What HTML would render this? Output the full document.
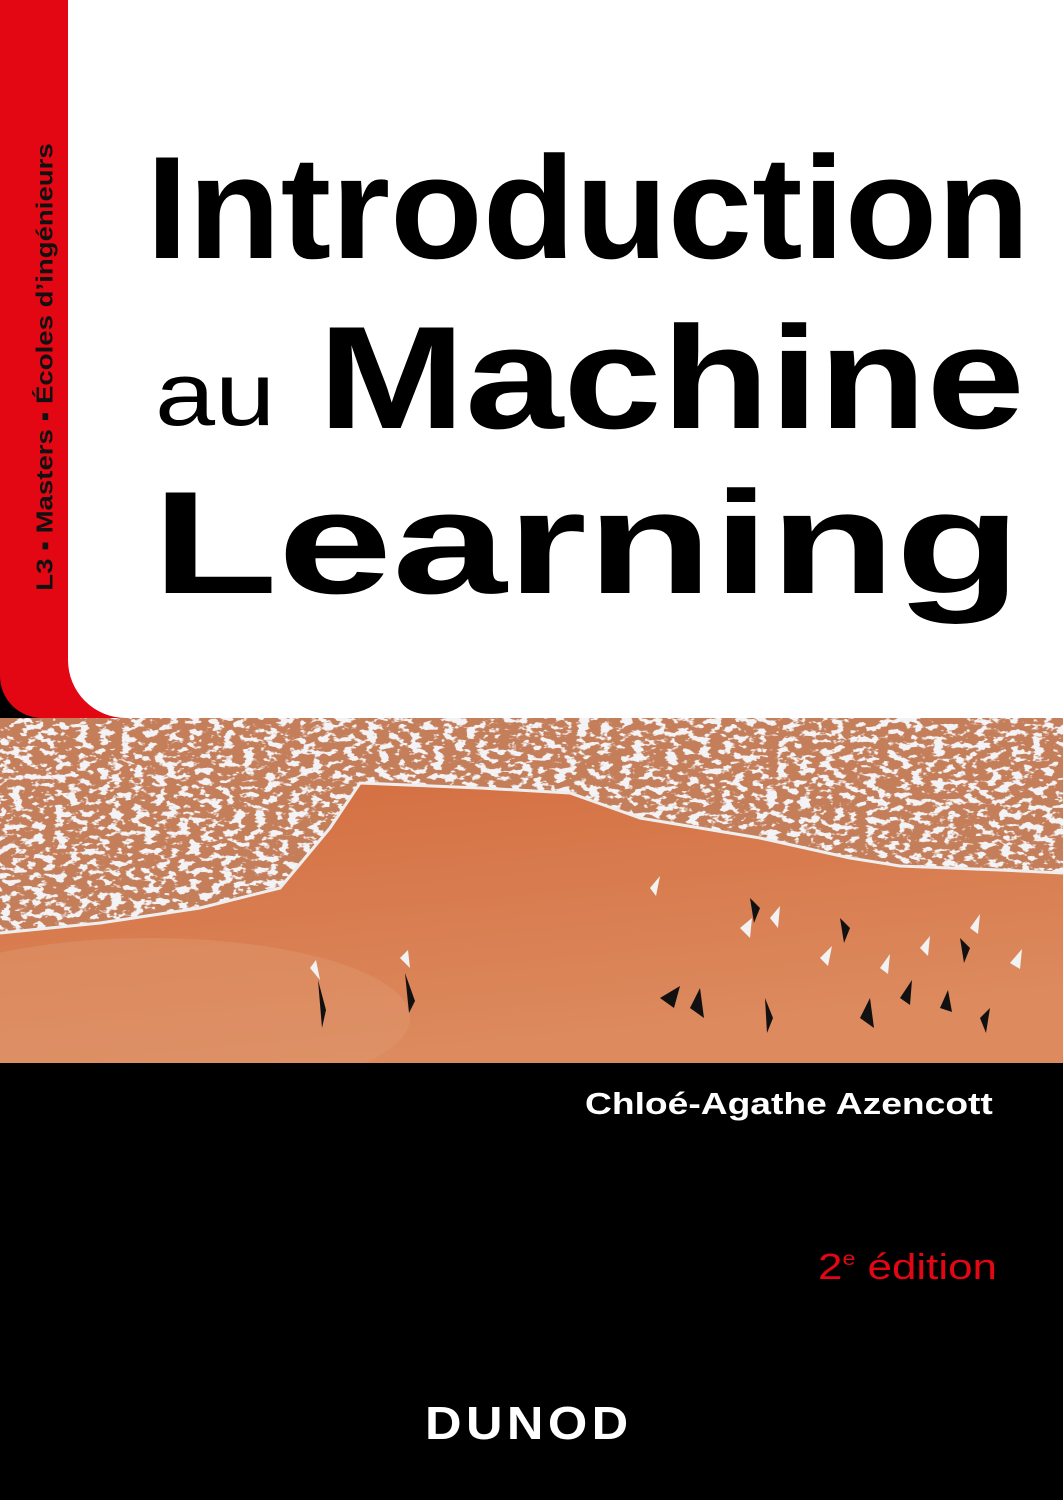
<!DOCTYPE html>
<html><head><meta charset="utf-8"><style>
html,body{margin:0;padding:0}
body{width:1063px;height:1500px;position:relative;overflow:hidden;background:#000;font-family:"Liberation Sans","DejaVu Sans",sans-serif}
#top{position:absolute;left:0;top:0;width:1063px;height:718px;background:#e30613;border-bottom-left-radius:42px}
#white{position:absolute;left:68px;top:0;width:995px;height:718px;background:#fff;border-bottom-left-radius:58px}
#side{position:absolute;left:45px;top:367px;transform:translate(-50%,-50%) rotate(-90deg) scaleX(1.2);white-space:nowrap;font-weight:bold;font-size:23px;color:#111}
.t{position:absolute;font-weight:bold;color:#000;white-space:nowrap;line-height:1;transform-origin:0 0}
#photo{position:absolute;left:0;top:718px;width:1063px;height:345px}
.s{position:absolute;white-space:nowrap;transform-origin:0 0;line-height:1}
</style></head><body>
<div id="top"></div>
<div id="white"></div>
<div id="side">L3 ▪ Masters ▪ Écoles d’ingénieurs</div>
<div class="t" style="left:146px;top:135px;font-size:146px;transform:scaleX(1.038)">Introduction</div>
<div class="t" style="left:155px;top:350px;font-size:90px;font-weight:normal;transform:scaleX(1.2)">au</div>
<div class="t" style="left:318px;top:305px;font-size:146px;transform:scaleX(1.21)">Machine</div>
<div class="t" style="left:152px;top:470px;font-size:146px;transform:scaleX(1.41)">Learning</div>
<svg id="photo" viewBox="0 0 1063 345" xmlns="http://www.w3.org/2000/svg">
<defs>
<linearGradient id="sand" x1="0" y1="0" x2="0.3" y2="1">
<stop offset="0" stop-color="#d2683a"/><stop offset="1" stop-color="#dc8a5e"/></linearGradient>
<filter id="noise" x="0" y="0" width="100%" height="100%">
<feTurbulence type="fractalNoise" baseFrequency="0.09 0.16" numOctaves="3" seed="4" result="n"/>
<feColorMatrix in="n" type="matrix" values="0 0 0 0 0.9  0 0 0 0 0.89  0 0 0 0 0.91  0 0 0 12 -6.2"/>
</filter>
<clipPath id="fc"><path d="M0 0 H1063 V155 L1000 152 L900 148 L850 140 L760 120 L640 100 L570 75 L480 70 L360 65 L330 110 L280 170 L200 190 L100 205 L0 215 Z"/></clipPath>
</defs>
<rect width="1063" height="345" fill="url(#sand)"/>
<ellipse cx="150" cy="300" rx="260" ry="80" fill="#e29a72" opacity="0.4"/>
<g clip-path="url(#fc)">
<rect width="1063" height="345" fill="#c47e5a"/>
<rect width="1063" height="345" filter="url(#noise)"/>
</g>
<path d="M0 215 L100 205 L200 190 L280 170 L330 110 L360 65 L480 70 L570 75 L640 100 L760 120 L850 140 L900 148 L1000 152 L1063 155" stroke="#eee" stroke-width="3" fill="none"/>
<g fill="#111">
<path d="M318 262 l8 30 l-4 18 z"/><path d="M405 255 l10 28 l-6 12 z"/>
<path d="M660 280 l20 -12 l-6 22 z"/><path d="M690 290 l10 -20 l4 30 z"/>
<path d="M750 180 l10 10 l-6 15z"/><path d="M765 280 l8 20 l-6 15z"/>
<path d="M860 300 l10 -20 l4 30z"/><path d="M900 280 l12 -18 l-2 25z"/>
<path d="M940 290 l8 -18 l4 22z"/><path d="M980 300 l10 -10 l-4 25z"/>
<path d="M840 200 l10 10 l-6 15z"/><path d="M960 220 l10 10 l-6 15z"/>
</g>
<g fill="#f2f2f2">
<path d="M310 250 l6 -8 l4 20 z"/><path d="M400 240 l8 -8 l2 18z"/>
<path d="M650 170 l10 -12 l-4 20z"/><path d="M740 210 l12 -10 l-2 20z"/>
<path d="M770 200 l10 -12 l-2 22z"/><path d="M820 240 l12 -12 l-4 20z"/>
<path d="M880 250 l10 -14 l-2 20z"/><path d="M920 230 l10 -12 l-2 20z"/>
<path d="M1010 245 l12 -14 l-2 20z"/><path d="M970 210 l10 -14 l-2 20z"/>
</g>
</svg>
<div class="s" style="left:585px;top:1088px;color:#fff;font-weight:bold;font-size:31px;transform:scaleX(1.2)">Chloé-Agathe Azencott</div>
<div class="s" style="left:818px;top:1249px;color:#e30613;font-size:36px;transform:scaleX(1.22)">2<span style="font-size:19px;position:relative;top:-14px">e</span> édition</div>
<div class="s" style="left:425px;top:1400px;color:#fff;font-weight:bold;font-size:46px;letter-spacing:4px;transform:scaleX(1.1)">DUNOD</div>
</body></html>
